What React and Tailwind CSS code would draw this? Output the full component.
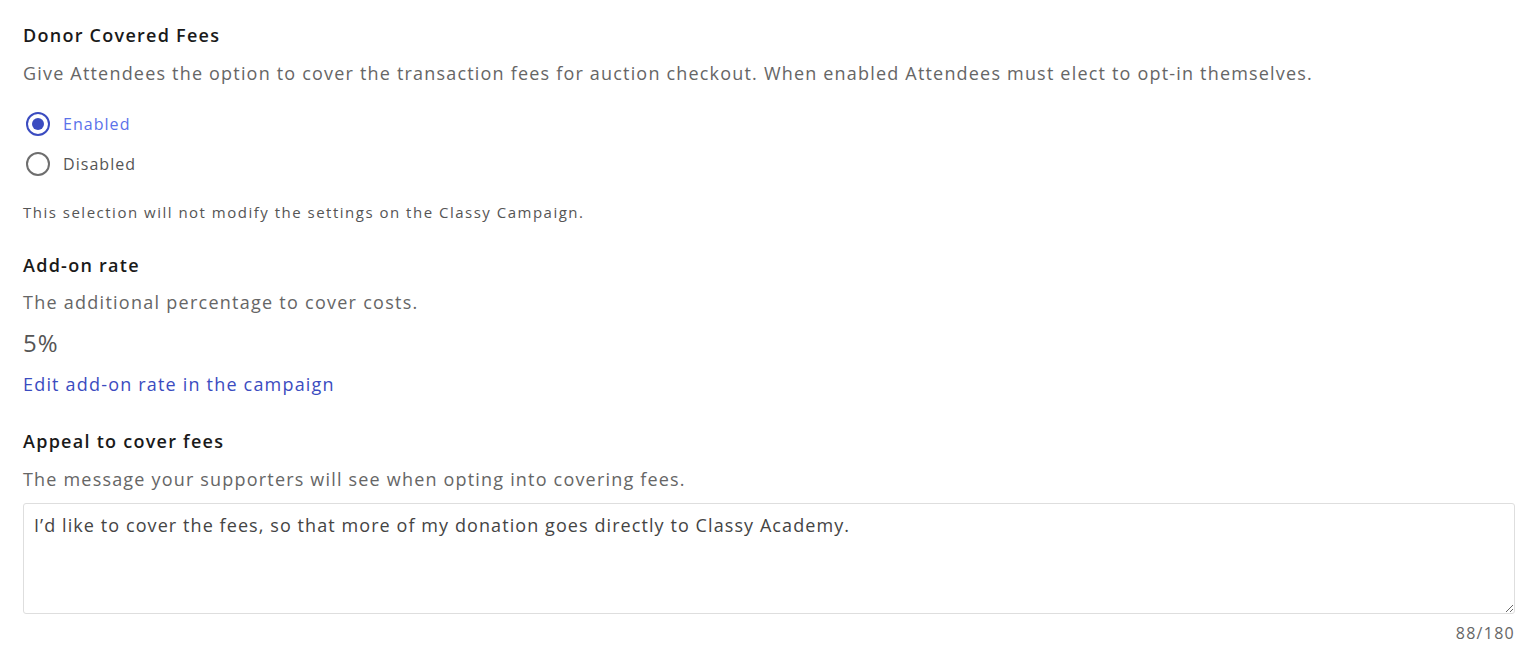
import { useState } from "react";

const font = { fontFamily: "'Open Sans', Lato, sans-serif" };

function Radio({ checked, label, onChange }) {
    return (
        <label className="flex items-center cursor-pointer h-10 pl-[3px]" onClick={onChange}>
            <span
                className={`flex items-center justify-center w-6 h-6 rounded-full border-2 ${
                    checked ? "border-[#3b4cc0]" : "border-[#6e6e6e]"
                }`}
            >
                {checked && <span className="w-3 h-3 rounded-full bg-[#3b4cc0]" />}
            </span>
            <span
                className={`ml-[13px] text-[16px] tracking-[0.065em] ${
                    checked ? "text-[#5a72ea]" : "text-[#555]"
                }`}
            >
                {label}
            </span>
        </label>
    );
}

export default function App() {
    const [enabled, setEnabled] = useState(true);
    const [appeal, setAppeal] = useState(
        "I’d like to cover the fees, so that more of my donation goes directly to Classy Academy."
    );

    return (
        <div className="bg-white min-h-screen px-[23px] pt-[23px]" style={font}>
            {/* donor covered fees */}
            <h2 className="text-[18px] leading-6 text-[#1a1a1a] font-semibold tracking-[0.07em]">Donor Covered Fees</h2>
            <p className="mt-[14px] text-[18px] leading-6 text-[#666] tracking-[0.066em]">
                Give Attendees the option to cover the transaction fees for auction checkout. When enabled
                Attendees must elect to opt-in themselves.
            </p>
            <div className="mt-[19px] flex flex-col">
                <Radio checked={enabled} label="Enabled" onChange={() => setEnabled(true)} />
                <Radio checked={!enabled} label="Disabled" onChange={() => setEnabled(false)} />
            </div>
            <p className="mt-[18px] text-[15px] leading-5 text-[#555] tracking-[0.1em]">
                This selection will not modify the settings on the Classy Campaign.
            </p>

            {/* add-on rate */}
            <h2 className="mt-[31px] text-[18px] leading-6 text-[#1a1a1a] font-semibold tracking-[0.07em]">Add-on rate</h2>
            <p className="mt-[13px] text-[18px] leading-6 text-[#666] tracking-[0.07em]">
                The additional percentage to cover costs.
            </p>
            <div className="mt-[15px] text-[24px] leading-7 text-[#555] tracking-[0.04em]">5%</div>
            <a href="#" className="block mt-[15px] text-[18px] leading-6 text-[#3b4cc0] tracking-[0.066em]">
                Edit add-on rate in the campaign
            </a>

            {/* appeal */}
            <h2 className="mt-[33px] text-[18px] leading-6 text-[#1a1a1a] font-semibold tracking-[0.07em]">
                Appeal to cover fees
            </h2>
            <p className="mt-[14px] text-[18px] leading-6 text-[#666] tracking-[0.066em]">
                The message your supporters will see when opting into covering fees.
            </p>
            <textarea
                value={appeal}
                maxLength={180}
                onChange={(e) => setAppeal(e.target.value)}
                className="mt-[12px] block w-full h-[111px] border border-[#dedede] rounded-[3px] px-[10px] py-[9px] text-[18px] leading-6 text-[#444] tracking-[0.06em] outline-none"
                style={font}
            />
            <div className="mt-[9px] text-right text-[16px] leading-5 text-[#666] tracking-[0.08em]">{appeal.length}/180</div>
        </div>
    );
}
